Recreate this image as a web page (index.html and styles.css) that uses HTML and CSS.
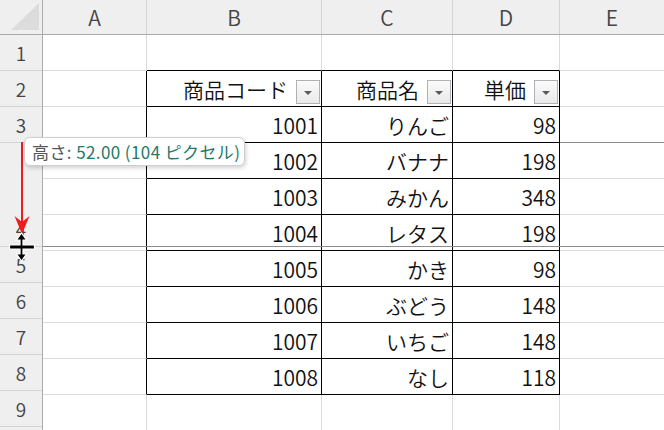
FILE: index.html
```html
<!DOCTYPE html>
<html lang="ja">
<head>
<meta charset="utf-8">
<title>Excel row height</title>
<link rel="stylesheet" href="styles.css">
</head>
<body>
<div class="app">
  <div class="colbar">
    <div class="corner"><svg width="42" height="34" viewBox="0 0 42 34"><polygon points="11,30 39,30 39,3" fill="#dcdcdc"/></svg></div>
    <div class="ch w-a">A</div>
    <div class="ch w-b">B</div>
    <div class="ch w-c">C</div>
    <div class="ch w-d">D</div>
    <div class="ch w-e">E</div>
  </div>
  <div class="main">
    <div class="rowheads">
      <div class="rh">1</div>
      <div class="rh">2</div>
      <div class="rh">3</div>
      <div class="rh tall">4</div>
      <div class="rh">5</div>
      <div class="rh">6</div>
      <div class="rh">7</div>
      <div class="rh">8</div>
      <div class="rh">9</div>
      <div class="rh"></div>
    </div>
    <div class="grid">
      <!-- row 1 -->
      <div class="c"></div><div class="c tt"></div><div class="c tt"></div><div class="c tt"></div><div class="c e"></div>
      <!-- row 2: header -->
      <div class="c tl"></div>
      <div class="c t hd"><span class="hl">商品コード</span><span class="fb"></span></div>
      <div class="c t hd"><span class="hl">商品名</span><span class="fb"></span></div>
      <div class="c t hd"><span class="hl">単価</span><span class="fb"></span></div>
      <div class="c e"></div>
      <!-- data rows -->
      <div class="c tl dk"></div><div class="c t">1001</div><div class="c t">りんご</div><div class="c t">98</div><div class="c e dk"></div>
      <div class="c tl"></div><div class="c t">1002</div><div class="c t">バナナ</div><div class="c t">198</div><div class="c e"></div>
      <div class="c tl"></div><div class="c t">1003</div><div class="c t">みかん</div><div class="c t">348</div><div class="c e"></div>
      <div class="c tl"></div><div class="c t">1004</div><div class="c t">レタス</div><div class="c t">198</div><div class="c e"></div>
      <div class="c tl"></div><div class="c t">1005</div><div class="c t">かき</div><div class="c t">98</div><div class="c e"></div>
      <div class="c tl"></div><div class="c t">1006</div><div class="c t">ぶどう</div><div class="c t">148</div><div class="c e"></div>
      <div class="c tl"></div><div class="c t">1007</div><div class="c t">いちご</div><div class="c t">148</div><div class="c e"></div>
      <div class="c tl"></div><div class="c t">1008</div><div class="c t">なし</div><div class="c t">118</div><div class="c e"></div>
      <!-- row 11 -->
      <div class="c"></div><div class="c"></div><div class="c"></div><div class="c"></div><div class="c e"></div>
    </div>
  </div>

  <div class="dragline"></div>
  <svg class="arrow" width="20" height="94" viewBox="0 0 20 94">
    <rect x="9" y="0" width="2" height="80" fill="#ee1c1c"/>
    <polygon points="2.5,74 10,80 17.5,74 10,92" fill="#ee1c1c"/>
  </svg>
  <svg class="cursor" width="30" height="30" viewBox="0 0 30 30">
    <g stroke="#fff" stroke-width="1.2" fill="#000" stroke-linejoin="miter">
      <polygon points="13.5,1 8.5,8 12,8 12,13 1.5,13 1.5,17 12,17 12,22 8.5,22 13.5,29 18.5,22 15,22 15,17 26.5,17 26.5,13 15,13 15,8 18.5,8"/>
    </g>
  </svg>
  <div class="tooltip"><span class="tl-label">高さ: </span><span class="tl-val">52.00 (104 ピクセル)</span></div>
</div>
</body>
</html>
```

FILE: styles.css
```css
html, body {
  margin: 0;
  padding: 0;
}
body {
  width: 664px;
  height: 430px;
  overflow: hidden;
  background: #fff;
  font-family: "Noto Sans CJK JP", "Noto Sans", sans-serif;
  font-weight: 350;
}
.app {
  position: relative;
  width: 664px;
  height: 430px;
  overflow: hidden;
}
.colbar {
  display: flex;
  height: 34px;
  background: #efefef;
  border-bottom: 1px solid #ababab;
}
.corner {
  width: 42px;
  flex: none;
  border-right: 1px solid #ababab;
}
.corner svg {
  display: block;
}
.ch {
  flex: none;
  display: flex;
  align-items: center;
  justify-content: center;
  font-size: 21px;
  color: #444;
  border-right: 1px solid #d4d4d4;
  box-sizing: border-box;
}
.w-a { width: 104px; }
.w-b { width: 175px; }
.w-c { width: 131px; }
.w-d { width: 107px; }
.w-e { flex: 1; border-right: none; }

.main {
  display: flex;
}
.rowheads {
  width: 42px;
  flex: none;
  background: #efefef;
  border-right: 1px solid #ababab;
  display: flex;
  flex-direction: column;
}
.rh {
  height: 35px;
  flex: none;
  border-bottom: 1px solid #d4d4d4;
  display: flex;
  align-items: flex-end;
  justify-content: center;
  font-size: 19px;
  line-height: 35px;
  color: #444;
}
.rh.tall {
  height: 103px;
}
.grid {
  flex: 1;
  display: grid;
  grid-template-columns: 104px 175px 131px 107px 1fr;
  grid-auto-rows: 36px;
}
.c {
  box-sizing: border-box;
  border-right: 1px solid #dcdcdc;
  border-bottom: 1px solid #dcdcdc;
  display: flex;
  align-items: center;
  justify-content: flex-end;
  padding-right: 3px;
  font-size: 21px;
  color: #111;
}
.c.e { border-right: none; }
.c.tt { border-bottom-color: #000; }
.c.tl { border-right-color: #000; }
.c.dk { border-bottom-color: #8c8c8c; }
.c.t {
  border-right-color: #000;
  border-bottom-color: #000;
}
.c.hd {
  padding-right: 1px;
}
.hl {
  margin-right: 8px;
}
.fb {
  align-self: flex-end;
  margin-bottom: 2px;
  width: 24px;
  height: 24px;
  box-sizing: border-box;
  border: 1px solid #aeb1b6;
  background: linear-gradient(#fbfbfb, #e9e9ea);
  position: relative;
}
.fb::after {
  content: "";
  position: absolute;
  left: 7px;
  top: 10px;
  border-left: 4px solid transparent;
  border-right: 4px solid transparent;
  border-top: 4px solid #5a5a5a;
}

.dragline {
  position: absolute;
  left: 43px;
  right: 0;
  top: 246px;
  height: 1px;
  background: #8c8c8c;
}
.arrow {
  position: absolute;
  left: 12px;
  top: 142px;
}
.cursor {
  position: absolute;
  left: 8px;
  top: 232px;
}
.tooltip {
  position: absolute;
  left: 24px;
  top: 137px;
  width: 221px;
  height: 29px;
  box-sizing: border-box;
  border: 1px solid #cfcfcf;
  border-radius: 6px;
  background: #fff;
  box-shadow: 1px 2px 4px rgba(0, 0, 0, 0.18);
  display: flex;
  align-items: center;
  padding-left: 7px;
  font-size: 17px;
  font-weight: 400;
  letter-spacing: 0.4px;
  white-space: nowrap;
}
.tl-label { color: #555; white-space: pre; }
.tl-val { color: #1f7a68; }
```
